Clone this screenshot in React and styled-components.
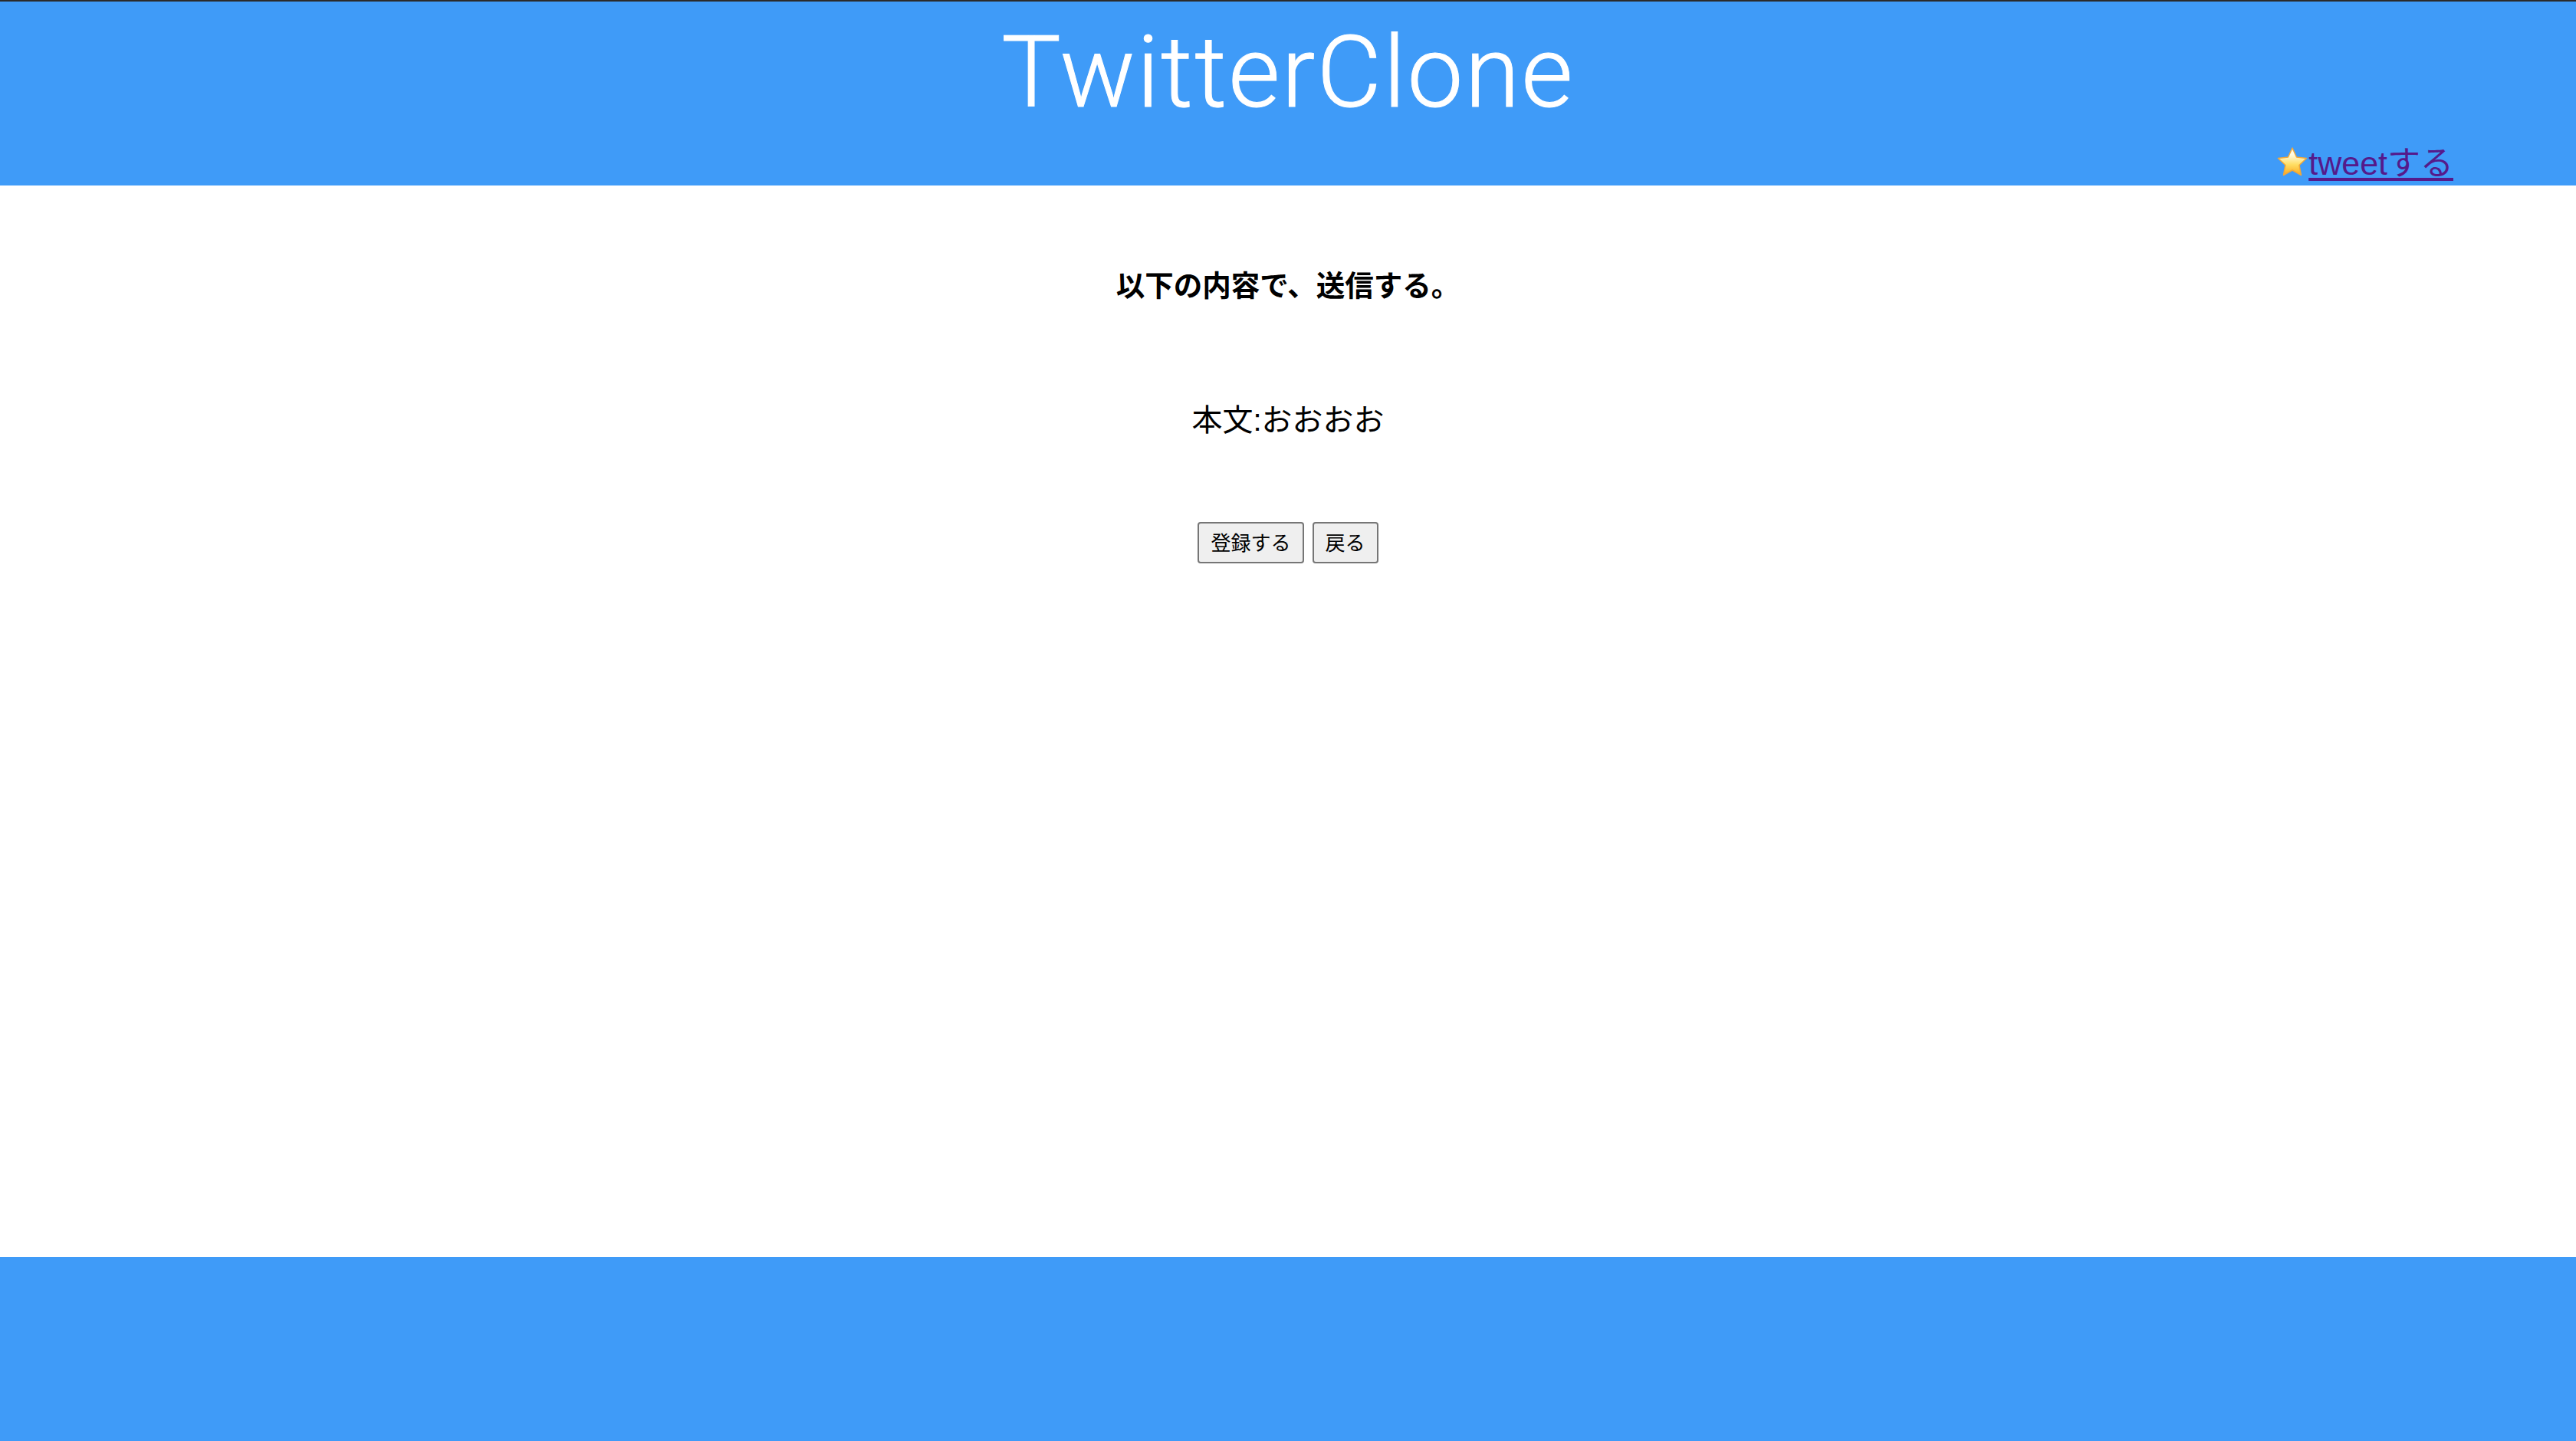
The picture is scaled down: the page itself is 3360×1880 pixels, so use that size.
import React from 'react';
import styled, { createGlobalStyle } from 'styled-components';

const GlobalStyle = createGlobalStyle`
  html, body {
    margin: 0;
    padding: 0;
    background: #fff;
  }

  body {
    font-family: "Liberation Sans", "Noto Sans CJK JP", sans-serif;
  }
`;

const Page = styled.div`
  height: 1880px;
  display: flex;
  flex-direction: column;
`;

const Header = styled.header`
  height: 240px;
  border-top: 2px solid #2b2b2b;
  background-color: #3f9bf8;
  display: flex;
  flex-direction: column;
`;

const Title = styled.h1`
  margin: 0;
  height: 188px;
  padding-top: 20px;
  box-sizing: border-box;
  color: #fff;
  font-family: Roboto, "Liberation Sans", sans-serif;
  font-size: 130px;
  font-weight: 300;
  letter-spacing: 2.2px;
  -webkit-text-stroke: 1px #fff;
  line-height: 146px;
  text-align: center;
`;

const HeaderNav = styled.nav`
  display: flex;
  justify-content: flex-end;
  padding-right: 160px;
`;

const TweetLink = styled.a`
  color: #551a8b;
  font-size: 43px;
  line-height: 46px;
  text-decoration: underline;
  text-decoration-thickness: 4px;
  text-underline-offset: 4px;
`;

const Star = styled.svg`
  width: 42px;
  height: 40px;
  vertical-align: -3px;
`;

const Main = styled.main`
  flex: 1;
  display: flex;
  flex-direction: column;
  align-items: center;
  padding-top: 107px;
`;

const Heading = styled.h2`
  margin: 0;
  font-size: 37.5px;
  line-height: 48px;
  font-weight: 700;
`;

const Body = styled.p`
  margin: 127px 0 0;
  font-size: 40px;
  line-height: 48px;
`;

const Actions = styled.div`
  display: flex;
  gap: 11px;
  margin-top: 109px;
`;

const Button = styled.button`
  height: 54px;
  padding: 0 15px 3px;
  border: 2px solid #767676;
  border-radius: 4px;
  background-color: #efefef;
  color: #000;
  font-family: inherit;
  font-size: 26px;
`;

const Footer = styled.footer`
  height: 240px;
  background-color: #3f9bf8;
`;

const StarIcon = () => (
  <Star viewBox="0 0 42 40">
    <defs>
      <linearGradient id="starFill" x1="0" y1="0" x2="0" y2="1">
        <stop offset="0.25" stopColor="#fffbe0" />
        <stop offset="0.6" stopColor="#ffdf66" />
        <stop offset="1" stopColor="#f9a91c" />
      </linearGradient>
    </defs>
    <path
      d="M21 2 L26.5 14 L39.5 15.5 L30 24.5 L32.5 37.5 L21 31 L9.5 37.5 L12 24.5 L2.5 15.5 L15.5 14 Z"
      fill="url(#starFill)"
      stroke="#f2a83a"
      strokeWidth="1.5"
      strokeLinejoin="round"
    />
  </Star>
);

const App = () => (
  <Page>
    <GlobalStyle />
    <Header>
      <Title>TwitterClone</Title>
      <HeaderNav>
        <TweetLink href="#tweet">
          <StarIcon />
          tweetする
        </TweetLink>
      </HeaderNav>
    </Header>
    <Main>
      <Heading>以下の内容で、送信する。</Heading>
      <Body>本文:おおおお</Body>
      <Actions>
        <Button type="button">登録する</Button>
        <Button type="button">戻る</Button>
      </Actions>
    </Main>
    <Footer />
  </Page>
);

export default App;
